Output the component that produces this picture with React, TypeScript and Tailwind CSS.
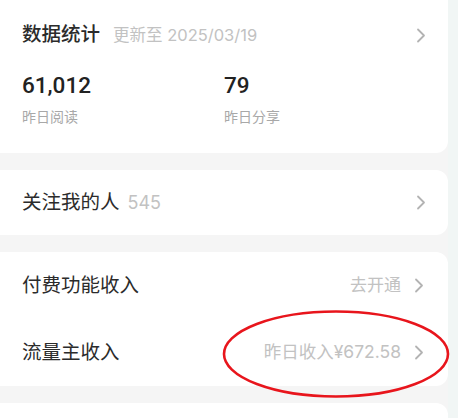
import React from "react";

const FONT = { fontFamily: '"Inter", "Noto Sans CJK SC", sans-serif' };
const NUM = { fontFamily: '"Roboto", "Noto Sans CJK SC", sans-serif' };

function Chevron() {
  return (
    <svg width="10" height="15" viewBox="0 0 10 15" className="shrink-0">
      <path d="M2 1.5 L8 7.5 L2 13.5" fill="none" stroke="#b3b3b3" strokeWidth="1.8" strokeLinecap="round" strokeLinejoin="round" />
    </svg>
  );
}

export default function App() {
  return (
    <div className="relative w-[458px] h-[418px] overflow-hidden bg-[#f5f5f5]" style={FONT}>
      <div className="flex flex-col gap-[17px] w-[460px] -ml-3 -mt-3">
        {/* Card 1 */}
        <div className="bg-white rounded-xl pl-[34px] pr-[22px] pt-[33px] pb-[26px]">
          <div className="flex items-center h-[28px]">
            <span className="text-[19.5px] text-[#2b2b2b] font-medium">数据统计</span>
            <span className="ml-[13px] text-[16.5px] text-[#c2c2c2]">更新至 2025/03/19</span>
            <div className="ml-auto"><Chevron /></div>
          </div>
          <div className="grid grid-cols-[202px_1fr] mt-[22px]">
            <div>
              <div className="h-[28px] leading-[28px] text-[22.5px] font-medium text-[#222]" style={NUM}>61,012</div>
              <div className="mt-[8px] h-[20px] leading-[20px] text-[14px] text-[#a8a8a8]">昨日阅读</div>
            </div>
            <div>
              <div className="h-[28px] leading-[28px] text-[22.5px] font-medium text-[#222]" style={NUM}>79</div>
              <div className="mt-[8px] h-[20px] leading-[20px] text-[14px] text-[#a8a8a8]">昨日分享</div>
            </div>
          </div>
        </div>

        {/* Card 2 */}
        <div className="bg-white rounded-xl pl-[34px] pr-[22px] h-[65px] flex items-center">
          <span className="text-[19.5px] text-[#2b2b2b]">关注我的人</span>
          <span className="ml-[8px] text-[18px] text-[#c2c2c2]">545</span>
          <div className="ml-auto"><Chevron /></div>
        </div>

        {/* Card 3 */}
        <div className="bg-white rounded-xl pl-[34px] pr-[24px] flex flex-col">
          <div className="h-[67px] flex items-center">
            <span className="text-[19.5px] text-[#2b2b2b]">付费功能收入</span>
            <span className="ml-auto text-[17px] text-[#c2c2c2]">去开通</span>
            <div className="ml-[13px]"><Chevron /></div>
          </div>
          <div className="h-[67px] flex items-center">
            <span className="text-[19.5px] text-[#2b2b2b]">流量主收入</span>
            <span className="ml-auto text-[17.5px] text-[#c2c2c2]">昨日收入¥672.58</span>
            <div className="ml-[13px]"><Chevron /></div>
          </div>
        </div>

        {/* Card 4 */}
        <div className="bg-white rounded-xl h-[60px]" />
      </div>

      {/* right strip */}
      <div className="absolute top-0 right-0 w-[10px] h-full bg-[#f1f6f5]" />

      {/* red ellipse annotation */}
      <svg className="absolute left-[221px] top-[309px]" width="232" height="92" viewBox="0 0 232 92">
        <ellipse cx="115" cy="45" rx="112" ry="42.5" fill="none" stroke="#e8151c" strokeWidth="2.6" />
      </svg>
    </div>
  );
}
